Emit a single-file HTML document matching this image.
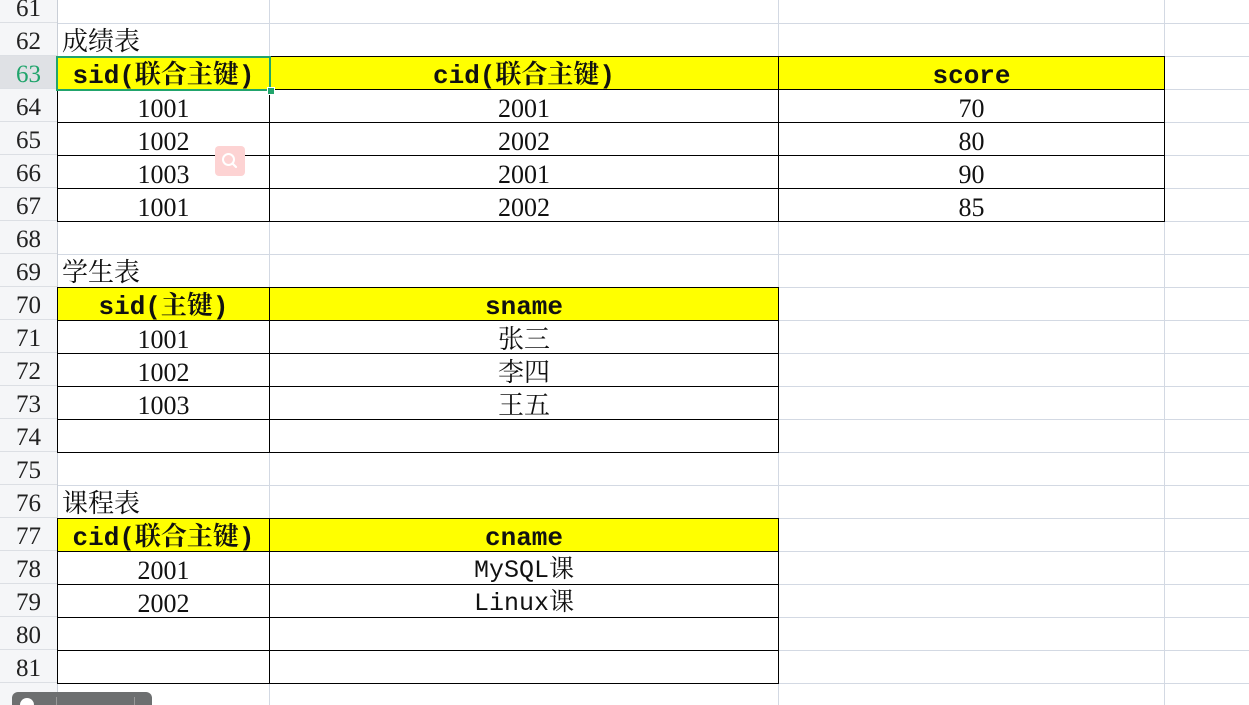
<!DOCTYPE html><html><head><meta charset="utf-8"><style>
html,body{margin:0;width:1249px;height:705px;overflow:hidden}
body{background:#fff;position:relative;font-family:"Liberation Serif","Noto Serif CJK SC",serif}
.grid{position:absolute;left:57px;top:0;width:1192px;height:705px;
background-image:linear-gradient(to bottom,transparent 32px,#d3d9e3 32px);background-size:100% 33px;background-position:0 -9px}
.v{position:absolute;top:0;height:705px;width:1px;background:#d3d9e3}
.hdr{position:absolute;left:0;top:0;width:57px;height:705px;background:#f5f6f8;border-right:1px solid #c9ced6}
.rn{position:absolute;left:0;width:57px;height:33px;line-height:38px;text-align:center;font-size:25px;color:#222;border-bottom:1px solid #dcdfe4;box-sizing:border-box;overflow:hidden}
.c{position:absolute;height:33px;line-height:38px;text-align:center;font-size:26px;color:#111;box-sizing:border-box;overflow:hidden}
.y{background:#ffff00;font-family:"Liberation Mono","Noto Serif CJK SC",monospace;font-weight:bold;font-size:26px}
.b{border:1px solid #000}
.t{position:absolute;font-size:26px;line-height:38px;left:62px;color:#111}
.m{font-family:'Liberation Mono','Noto Serif CJK SC',monospace;font-size:25px}
</style></head><body>
<div class="grid"></div>
<div class="v" style="left:269px"></div><div class="v" style="left:778px"></div><div class="v" style="left:1164px"></div>
<div class="hdr"></div>
<div class="rn" style="top:-10px">61</div><div class="rn" style="top:23px">62</div><div class="rn" style="top:56px;background:#dfe1e5;color:#1fa46b">63</div><div class="rn" style="top:89px">64</div><div class="rn" style="top:122px">65</div><div class="rn" style="top:155px">66</div><div class="rn" style="top:188px">67</div><div class="rn" style="top:221px">68</div><div class="rn" style="top:254px">69</div><div class="rn" style="top:287px">70</div><div class="rn" style="top:320px">71</div><div class="rn" style="top:353px">72</div><div class="rn" style="top:386px">73</div><div class="rn" style="top:419px">74</div><div class="rn" style="top:452px">75</div><div class="rn" style="top:485px">76</div><div class="rn" style="top:518px">77</div><div class="rn" style="top:551px">78</div><div class="rn" style="top:584px">79</div><div class="rn" style="top:617px">80</div><div class="rn" style="top:650px">81</div><div class="rn" style="top:683px">82</div>

<div class="t" style="top:23px">成绩表</div>
<div class="t" style="top:254px">学生表</div>
<div class="t" style="top:485px">课程表</div>

<div class="c y b" style="left:57px;top:56px;width:213px;height:34px">sid(联合主键)</div>
<div class="c y b" style="left:269px;top:56px;width:510px;height:34px">cid(联合主键)</div>
<div class="c y b" style="left:778px;top:56px;width:387px;height:34px">score</div>
<div class="c b" style="left:57px;top:89px;width:213px;height:34px">1001</div><div class="c b" style="left:269px;top:89px;width:510px;height:34px">2001</div><div class="c b" style="left:778px;top:89px;width:387px;height:34px">70</div>
<div class="c b" style="left:57px;top:122px;width:213px;height:34px">1002</div><div class="c b" style="left:269px;top:122px;width:510px;height:34px">2002</div><div class="c b" style="left:778px;top:122px;width:387px;height:34px">80</div>
<div class="c b" style="left:57px;top:155px;width:213px;height:34px">1003</div><div class="c b" style="left:269px;top:155px;width:510px;height:34px">2001</div><div class="c b" style="left:778px;top:155px;width:387px;height:34px">90</div>
<div class="c b" style="left:57px;top:188px;width:213px;height:34px">1001</div><div class="c b" style="left:269px;top:188px;width:510px;height:34px">2002</div><div class="c b" style="left:778px;top:188px;width:387px;height:34px">85</div>
<div style="position:absolute;left:56px;top:56px;width:215px;height:35px;border:2.5px solid #21a46c;box-sizing:border-box"></div>
<div style="position:absolute;left:267px;top:87px;width:6px;height:6px;background:#21a46c;border:1px solid #fff"></div>

<div class="c y b" style="left:57px;top:287px;width:213px;height:34px">sid(主键)</div>
<div class="c y b" style="left:269px;top:287px;width:510px;height:34px">sname</div>
<div class="c b" style="left:57px;top:320px;width:213px;height:34px">1001</div><div class="c b" style="left:269px;top:320px;width:510px;height:34px">张三</div>
<div class="c b" style="left:57px;top:353px;width:213px;height:34px">1002</div><div class="c b" style="left:269px;top:353px;width:510px;height:34px">李四</div>
<div class="c b" style="left:57px;top:386px;width:213px;height:34px">1003</div><div class="c b" style="left:269px;top:386px;width:510px;height:34px">王五</div>
<div class="c b" style="left:57px;top:419px;width:213px;height:34px"></div><div class="c b" style="left:269px;top:419px;width:510px;height:34px"></div>

<div class="c y b" style="left:57px;top:518px;width:213px;height:34px">cid(联合主键)</div>
<div class="c y b" style="left:269px;top:518px;width:510px;height:34px">cname</div>
<div class="c b" style="left:57px;top:551px;width:213px;height:34px">2001</div><div class="c b m" style="left:269px;top:551px;width:510px;height:34px">MySQL课</div>
<div class="c b" style="left:57px;top:584px;width:213px;height:34px">2002</div><div class="c b m" style="left:269px;top:584px;width:510px;height:34px">Linux课</div>
<div class="c b" style="left:57px;top:617px;width:213px;height:34px"></div><div class="c b" style="left:269px;top:617px;width:510px;height:34px"></div>
<div class="c b" style="left:57px;top:650px;width:213px;height:34px"></div><div class="c b" style="left:269px;top:650px;width:510px;height:34px"></div>

<div style="position:absolute;left:215px;top:146px;width:30px;height:30px;background:#fdd3d3;border-radius:4px">
<svg width="30" height="30" viewBox="0 0 30 30"><circle cx="13.5" cy="13.5" r="5.5" fill="none" stroke="#fff" stroke-width="2"/><path d="M17.5 17.5L21 21" stroke="#fff" stroke-width="2.2" stroke-linecap="round"/></svg></div>
<div style="position:absolute;left:12px;top:692px;width:140px;height:20px;background:#6d6f70;border-radius:6px"><div style="position:absolute;left:8px;top:6px;width:14px;height:14px;border-radius:50%;background:#fff"></div><div style="position:absolute;left:44px;top:5px;width:1px;height:10px;background:#999"></div><div style="position:absolute;left:122px;top:5px;width:1px;height:10px;background:#999"></div></div>
</body></html>
